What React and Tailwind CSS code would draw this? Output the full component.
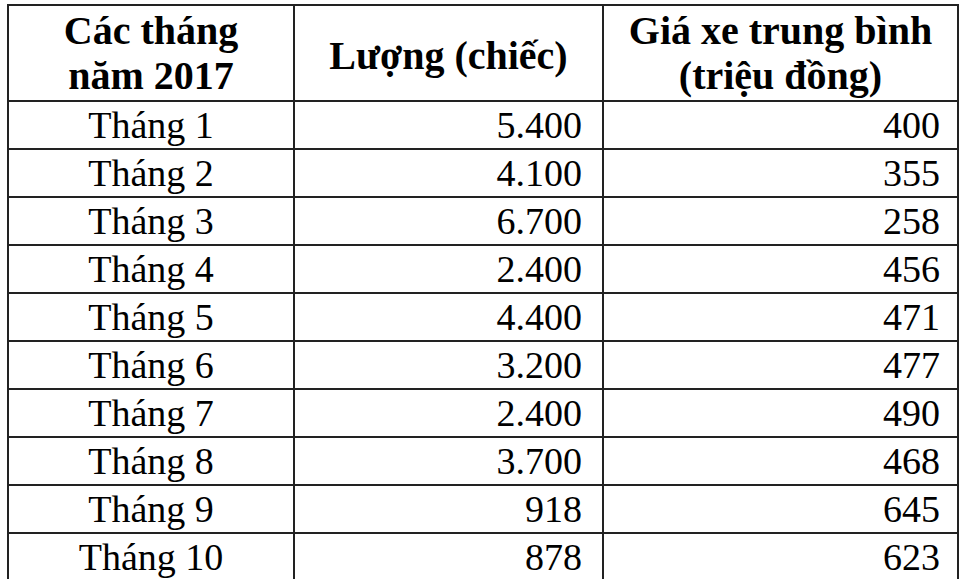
export default function App() {
  const rows = [
    ["Tháng 1", "5.400", "400"],
    ["Tháng 2", "4.100", "355"],
    ["Tháng 3", "6.700", "258"],
    ["Tháng 4", "2.400", "456"],
    ["Tháng 5", "4.400", "471"],
    ["Tháng 6", "3.200", "477"],
    ["Tháng 7", "2.400", "490"],
    ["Tháng 8", "3.700", "468"],
    ["Tháng 9", "918", "645"],
    ["Tháng 10", "878", "623"],
  ];
  return (
    <div className="relative w-[960px] h-[579px] overflow-hidden bg-white text-black pl-[7px] pt-[4px]" style={{ fontFamily: '"Liberation Serif", "Times New Roman", serif' }}>
      <table className="w-[950px] table-fixed border-collapse">
        <colgroup>
          <col className="w-[286px]" />
          <col className="w-[309px]" />
          <col className="w-[355px]" />
        </colgroup>
        <thead>
          <tr className="h-[96px]">
            <th className="border-2 border-[#222] p-0 text-center align-middle text-[40px] leading-[45px] font-bold">Các tháng<br />năm 2017</th>
            <th className="border-2 border-[#222] p-0 text-center align-middle text-[40px] leading-[45px] font-bold pt-[4px]">Lượng (chiếc)</th>
            <th className="border-2 border-[#222] p-0 text-center align-middle text-[40px] leading-[45px] font-bold">Giá xe trung bình<br />(triệu đồng)</th>
          </tr>
        </thead>
        <tbody>
          {rows.map((r) => (
            <tr key={r[0]} className="h-[48px]">
              <td className="border-2 border-[#222] p-0 text-center text-[38px] leading-[46px]">{r[0]}</td>
              <td className="border-2 border-[#222] p-0 pr-[20px] text-right text-[38px] leading-[46px]">{r[1]}</td>
              <td className="border-2 border-[#222] p-0 pr-[17px] text-right text-[38px] leading-[46px]">{r[2]}</td>
            </tr>
          ))}
        </tbody>
      </table>
      <div className="absolute left-[958px] top-[435px] w-[1px] h-[35px] bg-[#222]" />
    </div>
  );
}
